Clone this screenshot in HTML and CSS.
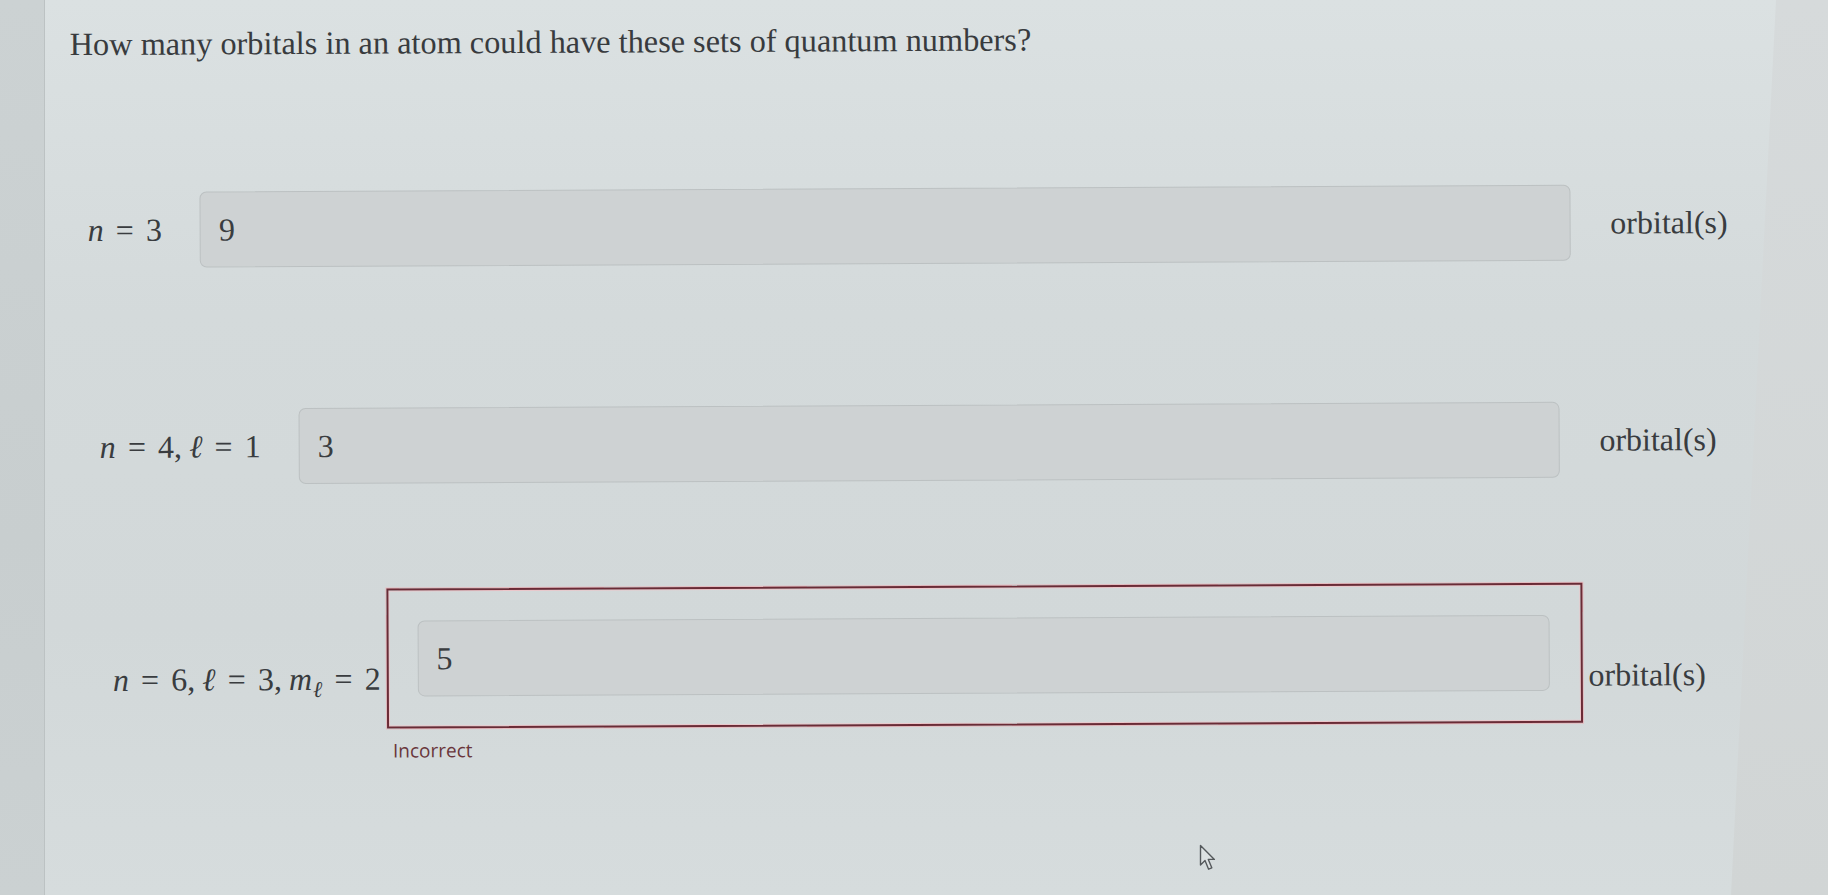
FILE: index.html
```html
<!DOCTYPE html>
<html lang="en">
<head>
<meta charset="utf-8">
<title>Quantum numbers</title>
<link rel="stylesheet" href="styles.css">
</head>
<body>
<div class="screen">
  <div class="bezel-left"></div>
  <main class="panel">
    <div class="content">
      <h1 class="question">How many orbitals in an atom could have these sets of quantum numbers?</h1>

      <div class="row row-1">
        <div class="label"><span class="mi">n</span><span class="mo">=</span><span class="mn">3</span></div>
        <div class="field"><div class="answer" role="textbox" aria-readonly="true">9</div></div>
        <div class="unit">orbital(s)</div>
      </div>

      <div class="row row-2">
        <div class="label"><span class="mi">n</span><span class="mo">=</span><span class="mn">4</span><span class="mp">,</span><span class="mi">ℓ</span><span class="mo">=</span><span class="mn">1</span></div>
        <div class="field"><div class="answer" role="textbox" aria-readonly="true">3</div></div>
        <div class="unit">orbital(s)</div>
      </div>

      <div class="row row-3">
        <div class="label"><span class="mi">n</span><span class="mo">=</span><span class="mn">6</span><span class="mp">,</span><span class="mi">ℓ</span><span class="mo">=</span><span class="mn">3</span><span class="mp">,</span><span class="mi">m</span><span class="msub">ℓ</span><span class="mo">=</span><span class="mn">2</span></div>
        <div class="field-col">
          <div class="field field-wrong"><div class="answer" role="textbox" aria-readonly="true">5</div></div>
          <div class="feedback">Incorrect</div>
        </div>
        <div class="unit">orbital(s)</div>
      </div>
    </div>
  </main>
  <div class="bezel-right"></div>
  <svg class="cursor" viewBox="0 0 17 28" width="17" height="28" aria-hidden="true">
    <path d="M1.5 1.5 L1.5 21 L6 16.6 L9.6 25.2 L12.8 23.8 L9.3 15.4 L15.4 15.4 Z" fill="#dde2e3" stroke="#55595c" stroke-width="1.4" stroke-linejoin="round"/>
  </svg>
</div>
</body>
</html>
```

FILE: styles.css
```css
html, body {
  margin: 0;
  padding: 0;
}

body {
  width: 1828px;
  height: 895px;
  overflow: hidden;
  background: #d3d9da;
}

.screen {
  position: relative;
  display: flex;
  width: 1828px;
  height: 895px;
  overflow: hidden;
}

.bezel-left {
  flex: 0 0 45px;
  background: linear-gradient(to bottom, #ccd2d3, #c8cecf 60%, #cbd1d2);
  box-shadow: inset -1px 0 0 #bcc2c3;
}

.panel {
  flex: 1 1 auto;
  min-width: 0;
  background: linear-gradient(to bottom, #dbe1e2 0%, #d4dadb 35%, #d2d8d9 70%, #d6dcdd 100%);
  font-family: "Liberation Serif", "Times New Roman", serif;
  color: #393c3f;
}

.content {
  padding-top: 21px;
  transform: rotate(-0.28deg);
  transform-origin: 50% 40%;
}

.bezel-right {
  flex: 0 0 97px;
  margin-left: -45px;
  background: linear-gradient(to bottom, #d6dadb, #d1d5d5);
  clip-path: polygon(45px 0, 100% 0, 100% 100%, 0 100%);
}

.question {
  margin: 0;
  padding-left: 26px;
  font-size: 32.3px;
  line-height: 38px;
  font-weight: normal;
  color: #383b3e;
}

.row {
  display: flex;
  align-items: center;
  gap: 7px;
  font-size: 32px;
  line-height: 38px;
}

.row-1 {
  margin-top: 97px;
  padding-left: 43px;
  padding-right: 48px;
}

.row-2 {
  margin-top: 77px;
  padding-left: 54px;
  padding-right: 60px;
}

.row-3 {
  margin-top: 73px;
  padding-left: 66px;
  padding-right: 72px;
  gap: 6px;
}

.row-3 .label,
.row-3 .unit {
  padding-top: 10px;
}

.label {
  flex: 0 0 auto;
  white-space: nowrap;
}

.mi {
  font-style: italic;
}

.mo {
  margin: 0 0.38em;
}

.mp {
  margin-right: 0.22em;
}

.msub {
  font-style: italic;
  font-size: 0.7em;
  position: relative;
  top: 0.3em;
  margin-left: 0.04em;
}

.field {
  flex: 1 1 auto;
  min-width: 0;
  border: 2px solid transparent;
  padding: 30px 31px 30px 29px;
}

.field-col {
  flex: 1 1 auto;
  min-width: 0;
  display: flex;
  flex-direction: column;
}

.field-wrong {
  border-color: #6b2b36;
  box-shadow: inset 0 0 0 1px #ecc6ca, 0 0 0 1px #e4bcc0;
}

.answer {
  display: flex;
  align-items: center;
  box-sizing: border-box;
  height: 76px;
  padding: 0 18px;
  border: 1.5px solid #bcc1c2;
  border-radius: 7px;
  background: #ced2d3;
  font-family: "Liberation Serif", "Times New Roman", serif;
  font-size: 32px;
  line-height: 38px;
  color: #3a3d40;
}

.feedback {
  margin-top: 10px;
  padding-left: 6px;
  font-family: "Open Sans", "Liberation Sans", sans-serif;
  font-size: 19px;
  line-height: 24px;
  color: #6a363b;
}

.unit {
  flex: 0 0 auto;
  white-space: nowrap;
  color: #393c3f;
}

.cursor {
  position: absolute;
  left: 1199px;
  top: 844px;
}
```
